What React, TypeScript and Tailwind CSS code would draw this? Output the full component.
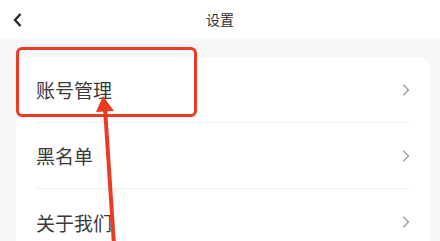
import { ChevronRight } from 'lucide-react';

const rows = ['账号管理', '黑名单', '关于我们'];

export default function App() {
  return (
    <div
      className="relative w-[440px] h-[241px] overflow-hidden bg-[#f7f7f7]"
      style={{ fontFamily: '"Noto Sans CJK SC", "Noto Sans", sans-serif' }}
    >
      <header className="relative h-[38px] bg-white flex items-center justify-center">
        <svg className="absolute left-[12px] top-[12px]" width="12" height="16" viewBox="0 0 12 16">
          <path d="M8.5 2 L3 8 L8.5 14" fill="none" stroke="#222" strokeWidth="2.2" />
        </svg>
        <span className="text-[14px] text-[#333]">设置</span>
      </header>

      <div className="mx-[16px] mt-[19px] w-[414px] bg-white rounded-[10px]">
        {rows.map((r, i) => (
          <div key={r} className="h-[66px] flex items-center px-[20px]">
            <div
              className={`flex-1 h-full flex items-center justify-between ${
                i < rows.length - 1 ? 'border-b border-[#f0f0f0]' : ''
              }`}
            >
              <span className="text-[19px] text-[#3a3a3a] leading-none">{r}</span>
              <ChevronRight className="w-[20px] h-[20px] text-[#999] -mr-[6px]" strokeWidth={1.4} />
            </div>
          </div>
        ))}
      </div>

      {/* annotation */}
      <div className="absolute left-[16px] top-[47px] w-[181px] h-[70px] border-[3px] border-[#ec3b25] rounded-[6px]" />
      <svg className="absolute left-0 top-0" width="440" height="241" viewBox="0 0 440 241">
        <line x1="105" y1="108" x2="114" y2="245" stroke="#ec3b25" strokeWidth="4" />
        <polygon points="103,96 96,112 114,111" fill="#ec3b25" />
      </svg>
    </div>
  );
}
